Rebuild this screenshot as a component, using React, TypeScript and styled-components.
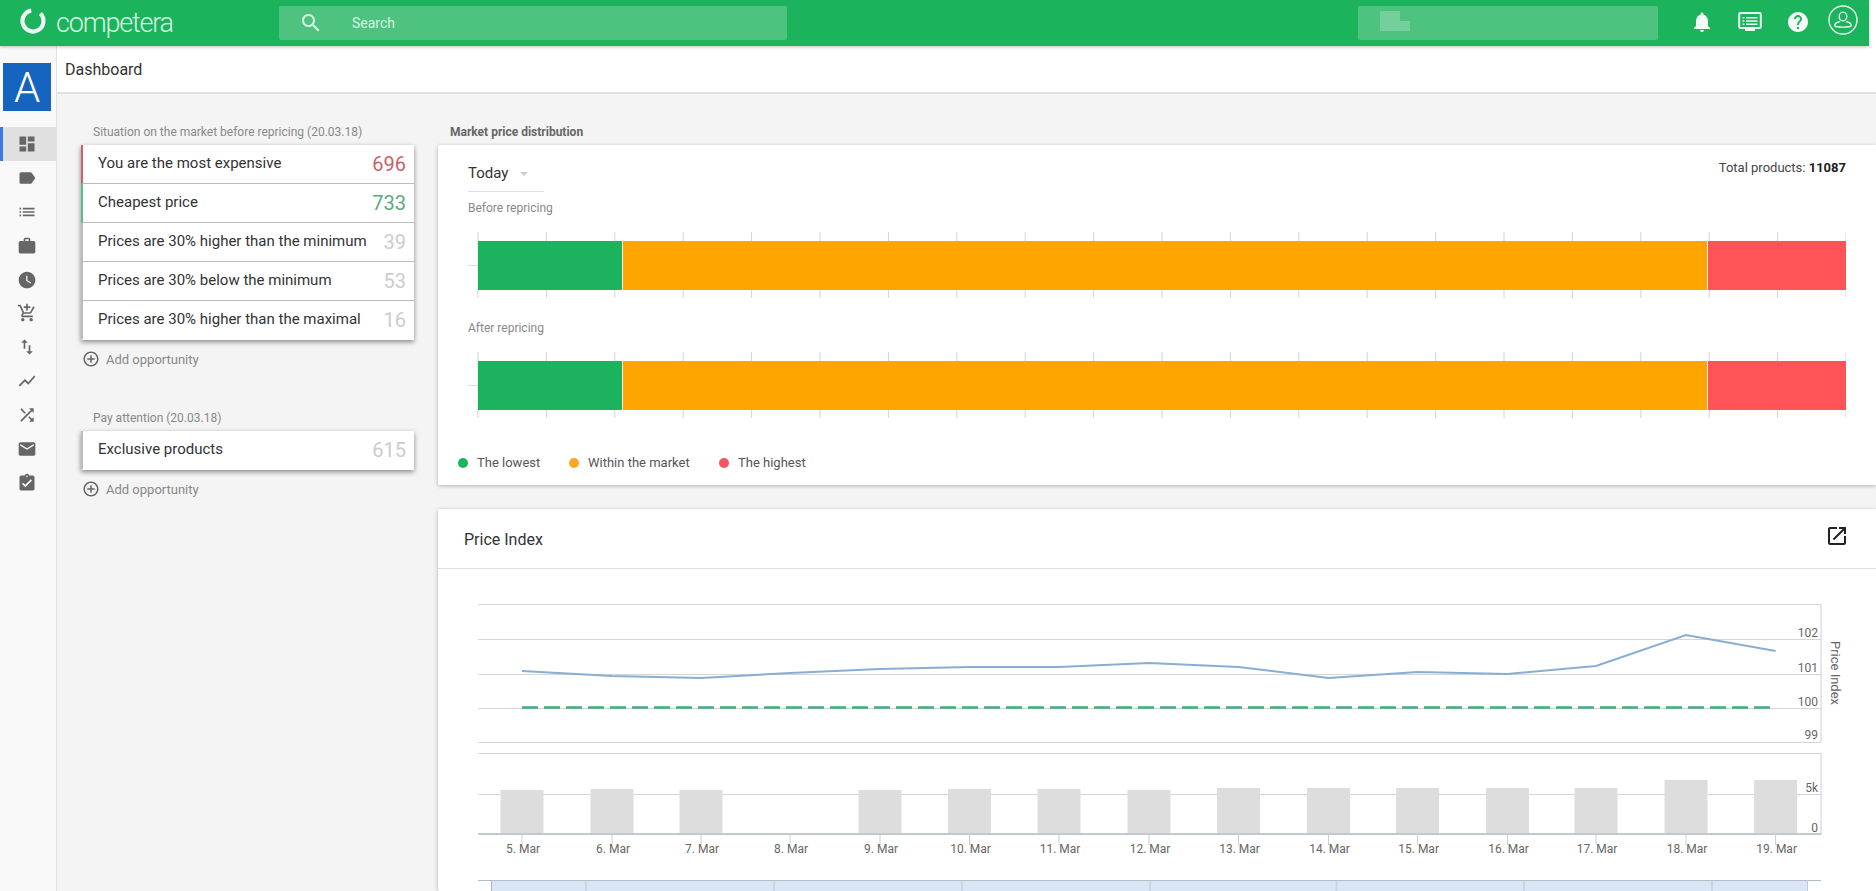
import React from "react";
import styled, { createGlobalStyle } from "styled-components";

const GlobalStyle = createGlobalStyle`
  html, body { margin: 0; padding: 0; height: 100%; overflow: hidden; background: #fff; }
  body { font-family: Roboto, "Liberation Sans", sans-serif; color: #333; }
  #root { height: 100%; }
  * { box-sizing: border-box; }
`;

const P = {
  dashboard: "M3 13h8V3H3v10zm0 8h8v-6H3v6zm10 0h8V11h-8v10zm0-18v6h8V3h-8z",
  label: "M17.63 5.84C17.27 5.33 16.67 5 16 5L5 5.01C3.9 5.01 3 5.9 3 7v10c0 1.1.9 1.99 2 1.99L16 19c.67 0 1.27-.33 1.63-.84L22 12l-4.37-6.16z",
  list: "M3 13h2v-2H3v2zm0 4h2v-2H3v2zm0-8h2V7H3v2zm4 4h14v-2H7v2zm0 4h14v-2H7v2zM7 7v2h14V7H7z",
  work: "M20 6h-4V4c0-1.11-.89-2-2-2h-4c-1.11 0-2 .89-2 2v2H4c-1.11 0-1.99.89-1.99 2L2 19c0 1.11.89 2 2 2h16c1.11 0 2-.89 2-2V8c0-1.11-.89-2-2-2zm-6 0h-4V4h4v2z",
  clock: "M12 2C6.5 2 2 6.5 2 12s4.5 10 10 10 10-4.5 10-10S17.5 2 12 2zm4.2 14.2L11 13V7h1.5v5.2l4.5 2.7-.8 1.3z",
  cart: "M11 9h2V6h3V4h-3V1h-2v3H8v2h3v3zm-4 9c-1.1 0-1.99.9-1.99 2S5.9 22 7 22s2-.9 2-2-.9-2-2-2zm10 0c-1.1 0-1.99.9-1.99 2s.89 2 1.99 2 2-.9 2-2-.9-2-2-2zm-9.83-3.25l.03-.12.9-1.63h7.45c.75 0 1.41-.41 1.75-1.03l3.86-7.01L19.42 4h-.01l-1.1 2-2.76 5H8.53l-.13-.27L6.16 6l-.95-2-.94-2H1v2h2l3.6 7.59-1.35 2.45c-.16.28-.25.61-.25.96 0 1.1.9 2 2 2h12v-2H7.42c-.13 0-.25-.11-.25-.25z",
  swap: "M16 17.01V10h-2v7.01h-3L15 21l4-3.99h-3zM9 3L5 6.99h3V14h2V6.99h3L9 3z",
  chart: "M3.5 18.49l6-6.01 4 4L22 6.92l-1.41-1.41-7.09 7.97-4-4L2 16.99z",
  shuffle: "M10.59 9.17L5.41 4 4 5.41l5.17 5.17 1.42-1.41zM14.5 4l2.04 2.04L4 18.59 5.41 20 17.96 7.46 20 9.5V4h-5.5zm.33 9.41l-1.41 1.41 3.13 3.13L14.5 20H20v-5.5l-2.04 2.04-3.13-3.13z",
  email: "M20 4H4c-1.1 0-1.99.9-1.99 2L2 18c0 1.1.9 2 2 2h16c1.1 0 2-.9 2-2V6c0-1.1-.9-2-2-2zm0 4l-8 5-8-5V6l8 5 8-5v2z",
  task: "M19 3h-4.18C14.4 1.84 13.3 1 12 1c-1.3 0-2.4.84-2.82 2H5c-1.1 0-2 .9-2 2v14c0 1.1.9 2 2 2h14c1.1 0 2-.9 2-2V5c0-1.1-.9-2-2-2zm-7 0c.55 0 1 .45 1 1s-.45 1-1 1-1-.45-1-1 .45-1 1-1zm-2 14l-4-4 1.41-1.41L10 14.17l6.59-6.59L18 9l-8 8z",
  bell: "M12 22c1.1 0 2-.9 2-2h-4c0 1.1.89 2 2 2zm6-6v-5c0-3.07-1.64-5.64-4.5-6.32V4c0-.83-.67-1.5-1.5-1.5s-1.5.67-1.5 1.5v.68C7.63 5.36 6 7.92 6 11v5l-2 2v1h16v-1l-2-2z",
  help: "M12 2C6.48 2 2 6.48 2 12s4.48 10 10 10 10-4.48 10-10S17.52 2 12 2zm1 17h-2v-2h2v2zm2.07-7.75l-.9.92C13.45 12.9 13 13.5 13 15h-2v-.5c0-1.1.45-2.1 1.17-2.83l1.24-1.26c.37-.36.59-.86.59-1.41 0-1.1-.9-2-2-2s-2 .9-2 2H8c0-2.21 1.79-4 4-4s4 1.79 4 4c0 .88-.36 1.68-.93 2.25z",
  open: "M19 19H5V5h7V3H5c-1.11 0-2 .9-2 2v14c0 1.1.89 2 2 2h14c1.1 0 2-.9 2-2v-7h-2v7zM14 3v2h3.59l-9.83 9.83 1.41 1.41L19 6.41V10h2V3h-7z",
  search: "M15.5 14h-.79l-.28-.27C15.41 12.59 16 11.11 16 9.5 16 5.91 13.09 3 9.5 3S3 5.91 3 9.5 5.91 16 9.5 16c1.61 0 3.09-.59 4.23-1.57l.27.28v.79l5 4.99L20.49 19l-4.99-5zm-6 0C7.01 14 5 11.99 5 9.5S7.01 5 9.5 5 14 7.01 14 9.5 11.99 14 9.5 14z",
  add: "M13 7h-2v4H7v2h4v4h2v-4h4v-2h-4V7zm-1-5C6.48 2 2 6.48 2 12s4.48 10 10 10 10-4.48 10-10S17.52 2 12 2zm0 18c-4.41 0-8-3.59-8-8s3.59-8 8-8 8 3.59 8 8-3.59 8-8 8z",
};

const Icon = ({ d, size, color }: { d: string; size: number; color: string }) => (
  <svg width={size} height={size} viewBox="0 0 24 24" fill={color} style={{ display: "block" }}>
    <path d={d} />
  </svg>
);

const Page = styled.div`
  display: flex;
  flex-direction: column;
  height: 891px;
  overflow: hidden;
`;
const TopBar = styled.header`
  flex: none;
  width: 1869px;
  height: 46px;
  background: #1bb35c;
  box-shadow: 0 1px 3px rgba(0, 0, 0, 0.25);
  display: flex;
  align-items: center;
  position: relative;
  z-index: 2;
`;
const Logo = styled.div`
  width: 279px;
  padding-left: 18px;
  display: flex;
  align-items: center;
  gap: 8px;
`;
const LogoMarkBox = styled.div`
  margin-top: -4px;
`;
const LogoText = styled.span`
  font-size: 27px;
  font-weight: 300;
  color: #d8f4e3;
  letter-spacing: -1.2px;
  line-height: 46px;
`;
const SearchBox = styled.div<{ $w: number }>`
  width: ${(p) => p.$w}px;
  height: 34px;
  border-radius: 2px;
  background: #4dc37f;
  display: flex;
  align-items: center;
  padding-left: 20px;
  gap: 29px;
`;
const SearchText = styled.span`
  font-size: 14px;
  color: #d9f3e3;
`;
const Redacted = styled.div`
  display: flex;
  flex-direction: column;
  height: 20px;
  margin-top: -4px;
  padding-left: 2px;
`;
const RedactedBlock = styled.div<{ $w: number }>`
  width: ${(p) => p.$w}px;
  height: 10px;
  background: #75cf9c;
`;
const Spacer = styled.div<{ $w: number }>`
  flex: none;
  width: ${(p) => p.$w}px;
`;
const TopIcons = styled.div`
  display: flex;
  align-items: center;
  margin: -3px 0 0 32px;
  gap: 24px;
`;
const UserWrap = styled.div`
  margin: -3px 0 0 -6px;
`;
const Body = styled.div`
  flex: 1;
  display: flex;
  min-height: 0;
`;
const Sidebar = styled.nav`
  flex: none;
  width: 57px;
  background: #f9f9f9;
  border-right: 1px solid #e2e2e2;
  padding-top: 17px;
`;
const Avatar = styled.div`
  width: 48px;
  height: 48px;
  margin: 0 0 16px 3px;
  background: #1565c0;
  color: #fff;
  font-size: 42px;
  font-weight: 300;
  display: flex;
  align-items: center;
  justify-content: center;
`;
const NavItem = styled.div<{ $active?: boolean }>`
  height: 33.9px;
  display: flex;
  align-items: center;
  justify-content: center;
  padding-right: 5px;
  background: ${(p) => (p.$active ? "#e0e0e0" : "transparent")};
  border-left: 3px solid ${(p) => (p.$active ? "#3d78e0" : "transparent")};
`;
const Main = styled.main`
  flex: 1;
  min-width: 0;
  display: flex;
  flex-direction: column;
  background: #f4f4f4;
`;
const TitleBar = styled.div`
  flex: none;
  height: 48px;
  background: #fff;
  border-bottom: 2px solid #e0e0e0;
  padding-left: 8px;
  font-size: 16px;
  line-height: 48px;
  color: #333;
`;
const Content = styled.div`
  flex: 1;
  display: flex;
  padding: 30px 0 0 24px;
  gap: 24px;
  min-height: 0;
`;
const LeftCol = styled.section`
  flex: none;
  width: 333px;
`;
const RightCol = styled.section`
  flex: 1;
  min-width: 0;
  display: flex;
  flex-direction: column;
`;
const GroupLabel = styled.div`
  font-size: 12px;
  line-height: 16px;
  color: #888;
  padding-left: 12px;
  margin-bottom: 5px;
`;
const SectionLabel = styled.div`
  font-size: 12px;
  font-weight: 700;
  line-height: 16px;
  color: #666;
  padding-left: 12px;
  margin-bottom: 5px;
`;
const OppCard = styled.div`
  background: #fff;
  box-shadow: 0 2px 5px rgba(0, 0, 0, 0.45);
`;
const OppRow = styled.div<{ $accent: string }>`
  height: 39px;
  display: flex;
  align-items: center;
  justify-content: space-between;
  padding: 0 8px 0 15px;
  border-left: 2px solid ${(p) => p.$accent};
  border-bottom: 1px solid #bbb;
  &:last-child {
    border-bottom-color: transparent;
  }
`;
const OppText = styled.span`
  font-size: 15px;
  color: #333;
  margin-top: -2px;
`;
const OppNumber = styled.span<{ $color: string }>`
  font-size: 20px;
  color: ${(p) => p.$color};
`;
const AddRow = styled.div`
  display: flex;
  align-items: center;
  gap: 6px;
  height: 20px;
  margin-top: 9px;
  padding-left: 1px;
  font-size: 13px;
  color: #888;
`;
const GroupGap = styled.div`
  height: 41px;
`;
const Panel = styled.div`
  background: #fff;
  box-shadow: 0 1px 4px rgba(0, 0, 0, 0.28);
  border-radius: 2px 0 0 2px;
`;
const DistPanel = styled(Panel)`
  height: 340px;
  padding: 16px 30px 0;
`;
const DistHead = styled.div`
  display: flex;
  justify-content: space-between;
  align-items: flex-start;
`;
const Select = styled.div`
  width: 76px;
  height: 31px;
  border-bottom: 1px solid #ddd;
  display: flex;
  align-items: center;
  gap: 12px;
  font-size: 15px;
  color: #333;
  padding-bottom: 6px;
`;
const Caret = styled.span`
  width: 0;
  height: 0;
  border-left: 4px solid transparent;
  border-right: 4px solid transparent;
  border-top: 4px solid #ccc;
  margin-top: 1px;
`;
const Total = styled.div`
  font-size: 13px;
  line-height: 16px;
  color: #444;
  margin-top: -1px;
  b {
    color: #222;
  }
`;
const SubLabel = styled.div<{ $top: number }>`
  font-size: 12px;
  line-height: 16px;
  color: #888;
  margin-top: ${(p) => p.$top}px;
`;
const BarSvg = styled.svg`
  display: block;
  margin-top: 16px;
`;
const Legend = styled.div`
  display: flex;
  margin: 37px 0 0 -10px;
`;
const LegendItem = styled.div<{ $w: number }>`
  width: ${(p) => p.$w}px;
  display: flex;
  align-items: center;
  gap: 9px;
  font-size: 13px;
  line-height: 16px;
  color: #555;
`;
const Dot = styled.span<{ $color: string }>`
  width: 10px;
  height: 10px;
  border-radius: 50%;
  background: ${(p) => p.$color};
`;
const IndexPanel = styled(Panel)`
  margin-top: 24px;
  flex: 1;
  min-height: 0;
  overflow: hidden;
`;
const IndexHead = styled.div`
  height: 60px;
  border-bottom: 1px solid #e0e0e0;
  display: flex;
  align-items: center;
  justify-content: space-between;
  padding: 0 27px 6px 26px;
  font-size: 16px;
  color: #333;
`;
const IndexTitle = styled.span`
  margin-top: 7px;
`;
const ChartSvg = styled.svg`
  display: block;
`;

const navItems = [P.dashboard, P.label, P.list, P.work, P.clock, P.cart, P.swap, P.chart, P.shuffle, P.email, P.task];

const Stacked = () => {
  const ticks = Array.from({ length: 21 }, (_, i) => 10 + i * 68.4);
  return (
    <BarSvg width={1378} height={66} viewBox="0 0 1378 66">
      <line x1={0} x2={10} y1={33.5} y2={33.5} stroke="#ddd" />
      {ticks.map((x) => (
        <line key={x} x1={x} x2={x} y1={0} y2={66} stroke="#d4d4d4" />
      ))}
      <rect x={10} y={9} width={144} height={49} fill="#1db25d" />
      <rect x={155} y={9} width={1084} height={49} fill="#ffa500" />
      <rect x={1240} y={9} width={138} height={49} fill="#ff5357" />
    </BarSvg>
  );
};

const days = [5, 6, 7, 8, 9, 10, 11, 12, 13, 14, 15, 16, 17, 18, 19];
const xs = [522, 612, 701, 790, 880, 969.5, 1059, 1149, 1238.5, 1328.5, 1417.6, 1507.5, 1596, 1686, 1775.6];
const ys = [671, 676, 678, 673, 669, 667, 667, 663, 667, 678, 672, 674, 666, 635, 651];
const tops = [790, 789, 790, 0, 790, 789, 789, 790, 788, 788, 788, 788, 788, 780, 780];
const navGrid = [586, 774, 962, 1150, 1336.5, 1524, 1712];

const axisText = { fontSize: 12, fill: "#666", fontFamily: "Roboto, sans-serif" };

const IndexChart = () => (
  <ChartSvg width={1438} height={323} viewBox="438 569 1438 323">
    {[604, 639, 674, 708, 742, 753, 794].map((y) => (
      <line key={y} x1={478} x2={1821} y1={y + 0.5} y2={y + 0.5} stroke="#d6d6d6" />
    ))}
    <line x1={1821} x2={1821} y1={604} y2={742} stroke="#ccd" />
    <line x1={1821} x2={1821} y1={753} y2={835} stroke="#ccd" />
    <polyline points={xs.map((x, i) => `${x},${ys[i]}`).join(" ")} fill="none" stroke="#88aed3" strokeWidth={2} />
    <line x1={522} x2={1772} y1={707.5} y2={707.5} stroke="#3fae78" strokeWidth={2.5} strokeDasharray="16 6" />
    {days.map((d, i) =>
      tops[i] ? <rect key={d} x={xs[i] - 21.5} y={tops[i]} width={43} height={834 - tops[i]} fill="#dddddd" /> : null
    )}
    <line x1={478} x2={1821} y1={834} y2={834} stroke="#c4c8cc" strokeWidth={2} />
    {days.map((d, i) => (
      <g key={d}>
        <line x1={xs[i]} x2={xs[i]} y1={835} y2={845} stroke="#ccc" />
        <text x={xs[i] + 1} y={853} textAnchor="middle" {...axisText}>
          {d}. Mar
        </text>
      </g>
    ))}
    {[
      ["102", 637],
      ["101", 672],
      ["100", 706],
      ["99", 739],
      ["5k", 792],
      ["0", 832],
    ].map(([t, y]) => (
      <text key={t} x={1818} y={y} textAnchor="end" {...axisText}>
        {t}
      </text>
    ))}
    <text transform="translate(1831 673) rotate(90)" textAnchor="middle" {...axisText} fontSize={13}>
      Price Index
    </text>
    <rect x={492} y={880} width={1315} height={12} fill="#d9e6f5" />
    {navGrid.map((x) => (
      <line key={x} x1={x} x2={x} y1={880} y2={892} stroke="#c6d6e6" strokeWidth={2} />
    ))}
    <line x1={478} x2={1821} y1={880.5} y2={880.5} stroke="#b4bcc8" />
    <line x1={491.5} x2={491.5} y1={880} y2={892} stroke="#aab4c0" />
    <line x1={1807.5} x2={1807.5} y1={880} y2={892} stroke="#c4ccd4" />
  </ChartSvg>
);

const DesktopIcon = () => (
  <svg width={24} height={22} viewBox="0 0 24 22" style={{ display: "block" }}>
    <rect x={1.2} y={2} width={21.6} height={15} rx={1.2} fill="none" stroke="#e8f8ef" strokeWidth={2} />
    <path d="M4.5 6h2v1.6h-2zM8 6h11.5v1.6H8zM4.5 9.2h2v1.6h-2zM8 9.2h11.5v1.6H8zM4.5 12.4h2V14h-2zM8 12.4h11.5V14H8z" fill="#e8f8ef" />
    <rect x={7} y={18} width={10} height={2} fill="#e8f8ef" />
  </svg>
);

const UserIcon = () => (
  <svg width={30} height={30} viewBox="0 0 30 30" style={{ display: "block" }}>
    <circle cx={15} cy={15} r={14} fill="none" stroke="#e8f8ef" strokeWidth={1.4} />
    <ellipse cx={15} cy={11.500} rx={3.8} ry={4.4} fill="none" stroke="#e8f8ef" strokeWidth={1.4} />
    <path d="M12 16.500c-4 1-6 2.500-5 4.500 1 1.500 15 1.500 16 0 1-2-1-3.500-5-4.500" fill="none" stroke="#e8f8ef" strokeWidth={1.4} />
  </svg>
);

const LogoMark = () => (
  <svg width={30} height={30} viewBox="0 0 30 30" style={{ display: "block" }}>
    <path d="M22.400 7.600A10.500 10.500 0 1 1 13.200 4.660" fill="none" stroke="#f0faf4" strokeWidth={4.2} />
  </svg>
);

const opps = [
  { text: "You are the most expensive", n: 696, accent: "#cb6169", color: "#cb6169" },
  { text: "Cheapest price", n: 733, accent: "#5cb88a", color: "#5cab80" },
  { text: "Prices are 30% higher than the minimum", n: 39, accent: "#bbb", color: "#ccc" },
  { text: "Prices are 30% below the minimum", n: 53, accent: "#bbb", color: "#ccc" },
  { text: "Prices are 30% higher than the maximal", n: 16, accent: "#bbb", color: "#ccc" },
];

const AddOpportunity = () => (
  <AddRow>
    <Icon d={P.add} size={18} color="#666" />
    Add opportunity
  </AddRow>
);

export default function App() {
  return (
    <Page>
      <GlobalStyle />
      <TopBar>
        <Logo>
          <LogoMarkBox>
            <LogoMark />
          </LogoMarkBox>
          <LogoText>competera</LogoText>
        </Logo>
        <SearchBox $w={508}>
          <Icon d={P.search} size={24} color="#d9f3e3" />
          <SearchText>Search</SearchText>
        </SearchBox>
        <Spacer $w={571} />
        <SearchBox $w={300}>
          <Redacted>
            <RedactedBlock $w={20} />
            <RedactedBlock $w={30} />
          </Redacted>
        </SearchBox>
        <TopIcons>
          <Icon d={P.bell} size={24} color="#f4fbf7" />
          <DesktopIcon />
          <Icon d={P.help} size={24} color="#f4fbf7" />
          <UserWrap>
            <UserIcon />
          </UserWrap>
        </TopIcons>
      </TopBar>
      <Body>
        <Sidebar>
          <Avatar>A</Avatar>
          {navItems.map((d, i) => (
            <NavItem key={d} $active={i === 0}>
              <Icon d={d} size={20} color="#666666" />
            </NavItem>
          ))}
        </Sidebar>
        <Main>
          <TitleBar>Dashboard</TitleBar>
          <Content>
            <LeftCol>
              <GroupLabel>Situation on the market before repricing (20.03.18)</GroupLabel>
              <OppCard>
                {opps.map((o) => (
                  <OppRow key={o.text} $accent={o.accent}>
                    <OppText>{o.text}</OppText>
                    <OppNumber $color={o.color}>{o.n}</OppNumber>
                  </OppRow>
                ))}
              </OppCard>
              <AddOpportunity />
              <GroupGap />
              <GroupLabel>Pay attention (20.03.18)</GroupLabel>
              <OppCard>
                <OppRow $accent="#bbb">
                  <OppText>Exclusive products</OppText>
                  <OppNumber $color="#ccc">615</OppNumber>
                </OppRow>
              </OppCard>
              <AddOpportunity />
            </LeftCol>
            <RightCol>
              <SectionLabel>Market price distribution</SectionLabel>
              <DistPanel>
                <DistHead>
                  <Select>
                    Today
                    <Caret />
                  </Select>
                  <Total>
                    Total products: <b>11087</b>
                  </Total>
                </DistHead>
                <SubLabel $top={8}>Before repricing</SubLabel>
                <Stacked />
                <SubLabel $top={22}>After repricing</SubLabel>
                <Stacked />
                <Legend>
                  <LegendItem $w={111}>
                    <Dot $color="#1db25d" />
                    The lowest
                  </LegendItem>
                  <LegendItem $w={150}>
                    <Dot $color="#ffa51f" />
                    Within the market
                  </LegendItem>
                  <LegendItem $w={120}>
                    <Dot $color="#f4545e" />
                    The highest
                  </LegendItem>
                </Legend>
              </DistPanel>
              <IndexPanel>
                <IndexHead>
                  <IndexTitle>Price Index</IndexTitle>
                  <Icon d={P.open} size={24} color="#222" />
                </IndexHead>
                <IndexChart />
              </IndexPanel>
            </RightCol>
          </Content>
        </Main>
      </Body>
    </Page>
  );
}
